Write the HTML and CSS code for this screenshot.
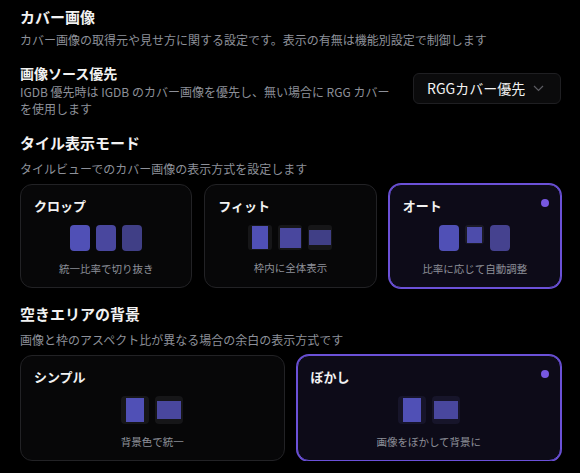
FILE: index.html
```html
<!DOCTYPE html>
<html lang="ja">
<head>
    <meta charset="UTF-8">
    <meta name="viewport" content="width=device-width, initial-scale=1.0">
    <title>カバー画像</title>
    <link rel="stylesheet" href="styles.css">
</head>
<body>

    <!-- カバー画像セクション -->
    <h1 class="section-title">カバー画像</h1>
    <p class="section-desc first">カバー画像の取得元や見せ方に関する設定です。表示の有無は機能別設定で制御します</p>

    <!-- 画像ソース優先 -->
    <div class="setting-row">
        <div class="setting-text">
            <h2 class="setting-title">画像ソース優先</h2>
            <p class="setting-desc">IGDB 優先時は IGDB のカバー画像を優先し、無い場合に RGG カバーを使用します</p>
        </div>
        <div class="select">
            <span>RGGカバー優先</span>
            <svg width="11" height="7" viewBox="0 0 11 7"><path d="M1 1l4.5 4.5L10 1" fill="none" stroke="#5c5c62" stroke-width="1.2"/></svg>
        </div>
    </div>

    <!-- タイル表示モード -->
    <h1 class="section-title mid">タイル表示モード</h1>
    <p class="section-desc">タイルビューでのカバー画像の表示方式を設定します</p>
    <div class="options three">
        <div class="option">
            <div class="option-title">クロップ</div>
            <div class="preview">
                <div class="tile c1"></div>
                <div class="tile c2"></div>
                <div class="tile c3"></div>
            </div>
            <div class="option-caption">統一比率で切り抜き</div>
        </div>
        <div class="option">
            <div class="option-title">フィット</div>
            <div class="preview">
                <div class="frame"><div class="img fit-portrait c1"></div></div>
                <div class="frame"><div class="img fit-square c2"></div></div>
                <div class="frame"><div class="img fit-wide c3"></div></div>
            </div>
            <div class="option-caption">枠内に全体表示</div>
        </div>
        <div class="option selected">
            <span class="dot"></span>
            <div class="option-title">オート</div>
            <div class="preview top">
                <div class="tile c1"></div>
                <div class="frame small"><div class="img auto-square"></div></div>
                <div class="tile c4"></div>
            </div>
            <div class="option-caption">比率に応じて自動調整</div>
        </div>
    </div>

    <!-- 空きエリアの背景 -->
    <h1 class="section-title mid">空きエリアの背景</h1>
    <p class="section-desc">画像と枠のアスペクト比が異なる場合の余白の表示方式です</p>
    <div class="options two">
        <div class="option">
            <div class="option-title">シンプル</div>
            <div class="preview">
                <div class="frame big"><div class="img bg-portrait c1"></div></div>
                <div class="frame big"><div class="img bg-wide c2"></div></div>
            </div>
            <div class="option-caption">背景色で統一</div>
        </div>
        <div class="option selected">
            <span class="dot"></span>
            <div class="option-title">ぼかし</div>
            <div class="preview">
                <div class="frame big blur"><div class="img bg-portrait c1"></div></div>
                <div class="frame big blur"><div class="img bg-wide c2"></div></div>
            </div>
            <div class="option-caption">画像をぼかして背景に</div>
        </div>
    </div>

</body>
</html>
```

FILE: styles.css
```css
body {
    margin: 0;
    padding: 0 19px 0 20px;
    background-color: #000;
    color: #f2f2f2;
    font-family: "Noto Sans CJK JP", "Noto Sans", sans-serif;
}

h1, h2, p {
    margin: 0;
}

.section-title {
    font-size: 15px;
    font-weight: 700;
    line-height: 22px;
    margin-top: 6px;
}

.section-title.mid {
    margin-top: 15px;
}

.section-desc {
    font-size: 12px;
    line-height: 17px;
    color: #8d9099;
    margin-top: 6px;
}

.section-desc.first {
    margin-top: 3px;
}

/* 設定行 */
.setting-row {
    display: flex;
    align-items: center;
    justify-content: space-between;
    margin-top: 15px;
}

.setting-text {
    width: 375px;
}

.setting-title {
    font-size: 14px;
    font-weight: 700;
    line-height: 20px;
}

.setting-desc {
    font-size: 12px;
    line-height: 17px;
    color: #8d9099;
}

.select {
    width: 117px;
    height: 29px;
    border: 1px solid #1f1f22;
    border-radius: 6px;
    background-color: #0b0b0c;
    display: flex;
    align-items: center;
    justify-content: space-between;
    padding: 0 16px 0 13px;
    font-size: 14px;
    color: #f2f2f2;
    margin-top: -4px;
}

/* 選択カード */
.options {
    display: grid;
    gap: 12px;
    margin-top: 7px;
}

.options.three {
    grid-template-columns: repeat(3, 1fr);
}

.options.two {
    grid-template-columns: repeat(2, 1fr);
    margin-top: 7px;
}

.option {
    position: relative;
    border: 1px solid #222225;
    border-radius: 12px;
    background-color: #070708;
    padding: 11px 13px 11px;
    display: flex;
    flex-direction: column;
}

.option.selected {
    border-color: #6b51d8;
    box-shadow: 0 0 0 1px #6b51d8;
    background-color: #0d0b18;
}

.dot {
    position: absolute;
    top: 14px;
    right: 11px;
    width: 8px;
    height: 8px;
    border-radius: 50%;
    background-color: #7758e0;
}

.option-title {
    font-size: 13px;
    font-weight: 700;
    line-height: 20px;
}

.option-caption {
    font-size: 10.5px;
    line-height: 15px;
    color: #8d9099;
    text-align: center;
    margin-top: 10px;
}

.preview {
    display: flex;
    justify-content: center;
    align-items: center;
    gap: 6px;
    margin-top: 9px;
}

.preview.top {
    align-items: flex-start;
}

.tile {
    width: 20px;
    height: 26px;
    border-radius: 4px;
}

.frame {
    width: 24px;
    height: 25px;
    border-radius: 3px;
    background-color: #161618;
    display: flex;
    align-items: center;
    justify-content: center;
}

.frame.small {
    width: 19px;
    height: 19px;
    background-color: #1b1a26;
}

.frame.big {
    width: 28px;
    height: 28px;
    border-radius: 4px;
}

.frame.blur {
    background-color: #17152a;
}

.c1 { background-color: #5050b6; }
.c2 { background-color: #49479e; }
.c3 { background-color: #403f86; }
.c4 { background-color: #45428f; }

.fit-portrait { width: 16px; height: 23px; }
.fit-square { width: 21px; height: 20px; }
.fit-wide { width: 22px; height: 15px; }

.auto-square {
    width: 15px;
    height: 16px;
    background-color: #4d4cab;
}

.bg-portrait { width: 18px; height: 24px; }
.bg-wide { width: 24px; height: 18px; }
```
